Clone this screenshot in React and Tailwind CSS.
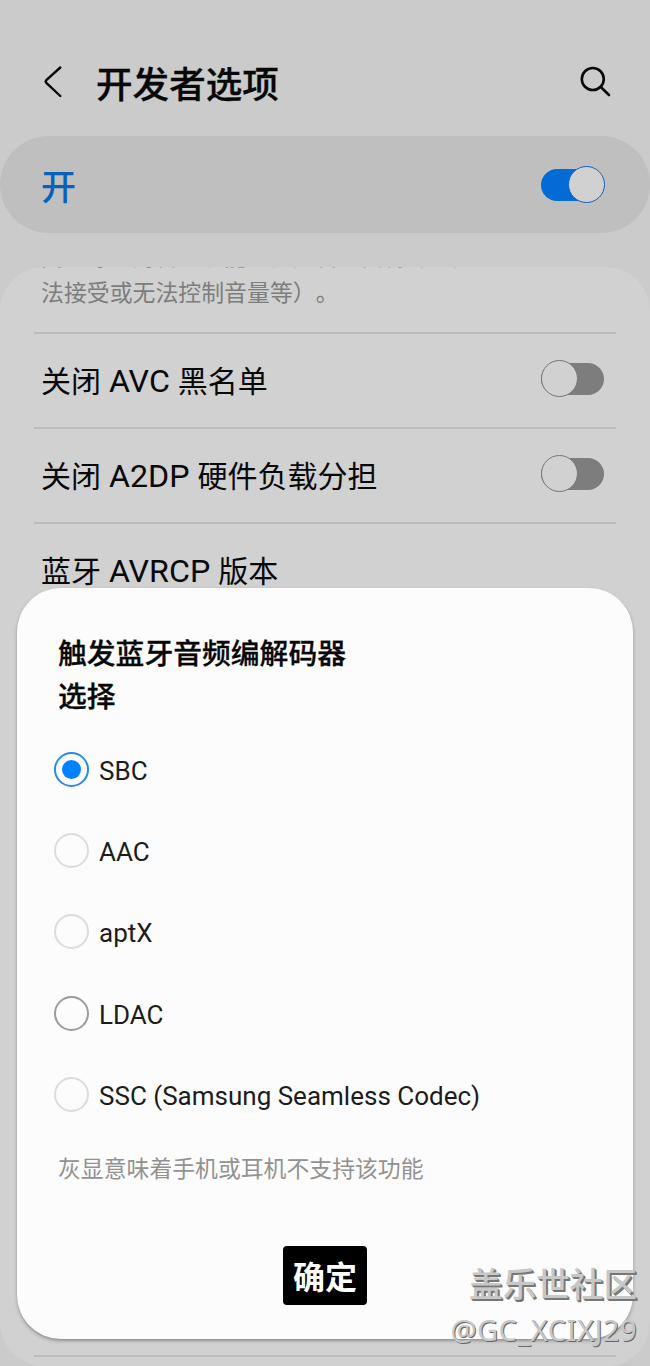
import React, { useState } from 'react'

const codecs = [
  { name: 'SBC', ring: 'border-[#2b8ae6]' },
  { name: 'AAC', ring: 'border-[#dcdcdc]' },
  { name: 'aptX', ring: 'border-[#dcdcdc]' },
  { name: 'LDAC', ring: 'border-[#9c9c9c]' },
  { name: 'SSC (Samsung Seamless Codec)', ring: 'border-[#dcdcdc]' },
];

const Switch = ({ on }) => (
  <span className={`relative block w-[63px] h-8 rounded-full ${on ? 'bg-[#026bd6]' : 'bg-[#7d7d7d]'}`}>
    <span
      className={`absolute -top-[3px] size-[37px] rounded-full border-[1.5px] bg-[#d1d1d1] ${on ? '-right-px border-[#1063bd]' : 'left-0 border-[#777777]'}`}
    />
  </span>
)

const Row = ({ before, latin, after, children }) => (
  <div className='h-[95px] pl-[7px] pr-3 flex items-center justify-between border-t-2 border-[#bcbcbc]'>
    <span className='pt-[3px] text-[30px] leading-[44px] text-[#080808] whitespace-pre'>
      {before}<span className='text-[32.2px]'> {latin} </span>{after}
    </span>
    {children && <span className='-mt-[3px]'>{children}</span>}
  </div>
)

const App = () => {
  const [selected, setSelected] = useState('SBC');

  return (
    <div className='relative w-[650px] h-[1366px] overflow-hidden bg-[#cbcbcb] [text-spacing-trim:space-all] font-[Roboto,"Noto_Sans_CJK_SC",sans-serif]'>
      <header className='h-[136px] pt-[27px] pl-[43px] pr-[38px] flex items-center'>
        <svg className='w-5 h-8' viewBox='0 0 20 32' fill='none' stroke='#080808' strokeWidth='2.4' strokeLinecap='round' strokeLinejoin='round'>
          <path d='M17.3 1.5 L3.3 14.2 Q2.1 15.5 3.3 16.8 L17.3 30' />
        </svg>
        <h1 className='ml-[33px] pt-2 grow text-[36.6px] leading-[50px] font-medium text-[#080808] [-webkit-text-stroke:0.3px_#080808]'>开发者选项</h1>
        <svg className='size-8' viewBox='0 0 32 32' fill='none' stroke='#080808' strokeWidth='2.6' strokeLinecap='round'>
          <circle cx='12.8' cy='13' r='11' />
          <path d='M20.8 21 L29 29' />
        </svg>
      </header>

      <div className='h-[97px] pl-[41px] pr-[46px] flex items-center justify-between rounded-full bg-[#bfbfbf]'>
        <span className='pt-[8px] text-[35px] leading-[50px] font-medium text-[#0a62b8]'>开</span>
        <Switch on />
      </div>

      <main className='mt-[34px] h-[1099px] px-[34px] overflow-hidden rounded-[44px] bg-[#d1d1d1]'>
        <div className='h-[64.5px] pl-[7px] pt-[8px] text-[22.9px] leading-[34px] text-[#7d7d7d]'>
          <p className='-mt-[34px] whitespace-nowrap'>闭蓝牙绝对音量功能（例如音量高得令人无</p>
          <p className='mt-[2px] whitespace-nowrap'>法接受或无法控制音量等）。</p>
        </div>
        <Row before='关闭' latin='AVC' after='黑名单'><Switch /></Row>
        <Row before='关闭' latin='A2DP' after='硬件负载分担'><Switch /></Row>
        <Row before='蓝牙' latin='AVRCP' after='版本' />
        <div className='mt-[738px] h-[2px] bg-[#bcbcbc]' />
      </main>

      <section className='absolute left-[17px] top-[588px] w-[616px] h-[751px] pl-[37px] rounded-[44px] bg-[#fcfcfc] shadow-[0_2px_4px_-1px_rgba(0,0,0,0.45)]'>
        <h2 className='pt-[45px] pl-1 w-[300px] text-[28.8px] leading-[43px] font-medium text-[#080808] [-webkit-text-stroke:0.3px_#080808]'>触发蓝牙音频编解码器选择</h2>
        <div className='mt-[10px]'>
          {codecs.map((codec) => (
            <button
              key={codec.name}
              type='button'
              className='h-[81.2px] flex items-center gap-[10px] text-[26px] leading-8 text-[#1c1c1c]'
              onClick={() => setSelected(codec.name)}
            >
              <span className={`size-[35px] flex items-center justify-center rounded-full border-2 ${codec.ring}`}>
                {selected === codec.name && <span className='size-[19px] rounded-full bg-[#0381fe]' />}
              </span>
              <span className='pt-[3px]'>{codec.name}</span>
            </button>
          ))}
        </div>
        <p className='mt-[18px] pl-1 text-[22.85px] leading-[34px] text-[#929292]'>灰显意味着手机或耳机不支持该功能</p>
        <button type='button' className='mt-[59px] ml-[229px] pt-[5px] w-[84px] h-[59px] rounded-[4px] bg-black text-white text-[32px] leading-[48px] font-bold'>
          确定
        </button>
      </section>

      <div className='absolute right-[13px] bottom-[14px] flex flex-col items-end text-[#c8c8c8] [text-shadow:1px_1px_0px_#777777,2px_2px_0px_#777777]'>
        <span className='text-[33.6px] leading-[44px] font-medium'>盖乐世社区</span>
        <span className='text-[29px] leading-[44px] tracking-[0.5px] [text-shadow:1px_1px_0px_#666666] font-["Noto_Sans",sans-serif]'>@GC_XCIXJ29</span>
      </div>
    </div>
  )
}

export default App
